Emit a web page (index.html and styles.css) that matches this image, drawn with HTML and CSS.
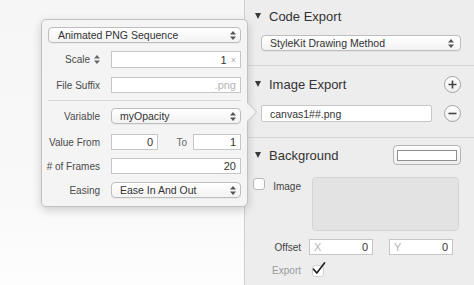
FILE: index.html
```html
<!DOCTYPE html>
<html>
<head>
<meta charset="utf-8">
<link rel="stylesheet" href="styles.css">
</head>
<body>
<div class="app">
  <div class="canvas"></div>
  <div class="sidebar">
    <section class="sec sec-code">
      <div class="hdr"><span class="tri"></span><span class="title">Code Export</span></div>
      <div class="select side-select"><span>StyleKit Drawing Method</span>
        <svg class="arrows" width="6" height="9" viewBox="0 0 6 9"><path d="M3 0L6 3.4H0Z M3 9L6 5.6H0Z" fill="#555"/></svg>
      </div>
    </section>
    <section class="sec sec-image">
      <div class="hdr"><span class="tri"></span><span class="title">Image Export</span>
        <span class="circle-btn"><svg width="9" height="9" viewBox="0 0 9 9"><path d="M4.5 0.5V8.5M0.5 4.5H8.5" stroke="#444" stroke-width="1.6"/></svg></span>
      </div>
      <div class="img-row">
        <div class="input text-left wide-input">canvas1##.png</div>
        <span class="circle-btn"><svg width="9" height="9" viewBox="0 0 9 9"><path d="M0.5 4.5H8.5" stroke="#444" stroke-width="1.6"/></svg></span>
      </div>
    </section>
    <section class="sec sec-bg">
      <div class="hdr"><span class="tri"></span><span class="title">Background</span>
        <span class="colorwell"><span class="swatch"></span></span>
      </div>
      <div class="bg-grid">
        <span class="checkbox"></span>
        <span class="lbl img-lbl">Image</span>
        <div class="imagewell"></div>
        <span></span>
        <span class="lbl">Offset</span>
        <div class="offsets">
          <div class="input xy"><span class="ph">X</span><span>0</span></div>
          <div class="input xy"><span class="ph">Y</span><span>0</span></div>
        </div>
        <span></span>
        <span class="lbl lbl-dim">Export</span>
        <div class="export-check">
          <span class="checkbox small"></span>
          <svg class="check" width="14" height="13" viewBox="0 0 14 13"><path d="M1.5 7.2L4.8 11L12.5 1" fill="none" stroke="#222" stroke-width="1.7" stroke-linecap="round" stroke-linejoin="round"/></svg>
        </div>
      </div>
    </section>
  </div>

  <div class="popover">
    <div class="select pop-select"><span>Animated PNG Sequence</span>
      <svg class="arrows" width="6" height="9" viewBox="0 0 6 9"><path d="M3 0L6 3.4H0Z M3 9L6 5.6H0Z" fill="#555"/></svg>
    </div>
    <div class="prow r-scale">
      <span class="plbl">Scale <svg width="6" height="9" viewBox="0 0 6 9"><path d="M3 0L6 3.4H0Z M3 9L6 5.6H0Z" fill="#666"/></svg></span>
      <div class="input h17"><span>1</span><span class="unit">×</span></div>
    </div>
    <div class="prow r-suffix">
      <span class="plbl">File Suffix</span>
      <div class="input"><span class="ph">.png</span></div>
    </div>
    <div class="psep"></div>
    <div class="prow r-var">
      <span class="plbl">Variable</span>
      <div class="select h17 ctl-select"><span>myOpacity</span>
        <svg class="arrows" width="6" height="9" viewBox="0 0 6 9"><path d="M3 0L6 3.4H0Z M3 9L6 5.6H0Z" fill="#555"/></svg>
      </div>
    </div>
    <div class="prow r-value">
      <span class="plbl">Value From</span>
      <div class="value-pair">
        <div class="input v1"><span>0</span></div>
        <span class="to">To</span>
        <div class="input v2"><span>1</span></div>
      </div>
    </div>
    <div class="prow r-frames">
      <span class="plbl"># of Frames</span>
      <div class="input"><span>20</span></div>
    </div>
    <div class="prow r-easing">
      <span class="plbl">Easing</span>
      <div class="select ctl-select"><span>Ease In And Out</span>
        <svg class="arrows" width="6" height="9" viewBox="0 0 6 9"><path d="M3 0L6 3.4H0Z M3 9L6 5.6H0Z" fill="#555"/></svg>
      </div>
    </div>
    <svg class="pop-arrow" width="11" height="20" viewBox="0 0 11 20"><path d="M0 0.5L9.5 10L0 19.5Z" fill="#f4f4f4"/><path d="M0 0.5L9.5 10L0 19.5" fill="none" stroke="#c2c2c2" stroke-width="1"/></svg>
  </div>
</div>
</body>
</html>
```

FILE: styles.css
```css
* { box-sizing: border-box; }
html, body { margin: 0; padding: 0; }
body {
  width: 474px;
  height: 285px;
  overflow: hidden;
  font-family: "Liberation Sans", Arial, sans-serif;
  color: #333;
  background: #f7f7f7;
}
.app {
  position: relative;
  display: flex;
  width: 474px;
  height: 285px;
}
.canvas {
  width: 245px;
  height: 285px;
  background: linear-gradient(to bottom, #f6f6f6, #f9f9f9 70%, #fdfdfd);
  border-right: 1px solid #cfcfcf;
}
.sidebar {
  flex: 1;
  background: #ededed;
  padding: 0 13px 0 8px;
}
.sec { border-bottom: 1px solid #d6d6d6; margin: 0 -13px 0 -8px; padding-left: 8px; padding-right: 13px; }
.sec-bg { border-bottom: none; }
.sec-code { padding-top: 6px; padding-bottom: 14px; }
.sec-image { padding-top: 8px; padding-bottom: 15px; }
.sec-bg { padding-top: 7px; }
.hdr {
  display: flex;
  align-items: center;
  height: 20px;
}
.tri {
  width: 0; height: 0;
  border-left: 3.5px solid transparent;
  border-right: 3.5px solid transparent;
  border-top: 6px solid #3a3a3a;
  margin-left: 2px;
  margin-right: 8px;
}
.title { flex: 1; font-size: 13px; color: #333; }
.select {
  display: flex;
  align-items: center;
  height: 16px;
  border: 1px solid #bdbdbd;
  border-radius: 4px;
  background: linear-gradient(#ffffff, #f3f3f3);
  box-shadow: 0 1px 0 rgba(0,0,0,0.04);
  font-size: 10.5px;
  color: #333;
  padding-left: 9px;
  padding-right: 4px;
}
.select span { flex: 1; white-space: nowrap; }
.select .arrows { flex: none; }
.side-select { margin: 9px 0 0 8px; padding-left: 8px; padding-right: 6px; }
.circle-btn {
  display: flex;
  align-items: center;
  justify-content: center;
  width: 17px;
  height: 17px;
  border-radius: 50%;
  border: 1px solid #a3a3a3;
  background: linear-gradient(#ffffff, #f0f0f0);
}
.img-row { display: flex; align-items: center; margin-top: 11px; margin-left: 8px; gap: 12px; }
.input {
  display: flex;
  align-items: center;
  justify-content: flex-end;
  height: 16px;
  border: 1px solid #c6c6c6;
  background: #fff;
  font-size: 11px;
  color: #333;
  padding: 0 4px;
}
.input.h17 { height: 17px; }
.text-left { justify-content: flex-start; }
.wide-input { width: 171px; height: 17px; padding-left: 8px; font-size: 10.5px; border-radius: 2px; }
.colorwell {
  display: flex;
  align-items: center;
  justify-content: center;
  width: 68px;
  height: 20px;
  border: 1px solid #b4b4b4;
  border-radius: 4px;
  background: linear-gradient(#fdfdfd, #efefef);
}
.swatch { width: 60px; height: 11px; background: #fff; border: 1px solid #8e8e8e; }
.bg-grid {
  display: grid;
  grid-template-columns: 11px 37px 152px;
  grid-template-rows: 54px 16px 14px;
  row-gap: 8px;
  margin-top: 12px;
}
.bg-grid > .imagewell, .bg-grid > .offsets, .bg-grid > .export-check { margin-left: 8px; }
.checkbox {
  width: 12px;
  height: 12px;
  border: 1px solid #b8b8b8;
  border-radius: 3px;
  background: #fff;
  margin-top: 1px;
}
.lbl { font-size: 10px; color: #444; text-align: right; align-self: center; }
.img-lbl { align-self: start; margin-top: 4px; }
.lbl-dim { color: #9a9a9a; }
.imagewell {
  height: 54px;
  width: 147px;
  border: 1px solid #d4d4d4;
  border-radius: 4px;
  background: #e3e3e3;
  transform: translateX(3px);
}
.offsets { display: flex; gap: 16px; }
.xy { width: 68px; justify-content: space-between; padding: 0 4px 0 4px; }
.ph { color: #b5b5b5; }
.export-check { position: relative; height: 14px; }
.checkbox.small { position: absolute; left: 3px; top: 1px; width: 12px; height: 12px; border-color: #d2d2d2; }
.check { position: absolute; left: 3px; top: -1px; }

.popover {
  position: absolute;
  left: 41px;
  top: 19px;
  width: 207px;
  height: 188px;
  background: #f4f4f4;
  border: 1px solid #c2c2c2;
  border-radius: 5px;
  box-shadow: 0 3px 10px rgba(0,0,0,0.18);
  padding: 7px 6px 7px 6px;
}
.pop-select { height: 16px; }
.prow {
  display: grid;
  grid-template-columns: 52px 130px;
  column-gap: 11px;
  align-items: center;
}
.plbl {
  font-size: 10px;
  color: #4a4a4a;
  text-align: right;
  white-space: nowrap;
  display: flex;
  justify-content: flex-end;
  align-items: center;
  gap: 4px;
}
.r-scale { margin-top: 8px; }
.r-suffix { margin-top: 9px; }
.psep { height: 1px; background: #dadada; margin-top: 7px; }
.r-var { margin-top: 7px; }
.r-value { margin-top: 10px; }
.r-frames { margin-top: 8px; }
.r-easing { margin-top: 8px; }
.unit { color: #aaa; font-size: 9px; margin-left: 4px; }
.ctl-select { padding-left: 8px; }
.value-pair { display: flex; align-items: center; }
.v1 { width: 47px; }
.v2 { width: 48px; }
.to { flex: 1; text-align: right; padding-right: 6px; font-size: 10px; color: #666; }
.pop-arrow { position: absolute; left: 205px; top: 82px; }
```
